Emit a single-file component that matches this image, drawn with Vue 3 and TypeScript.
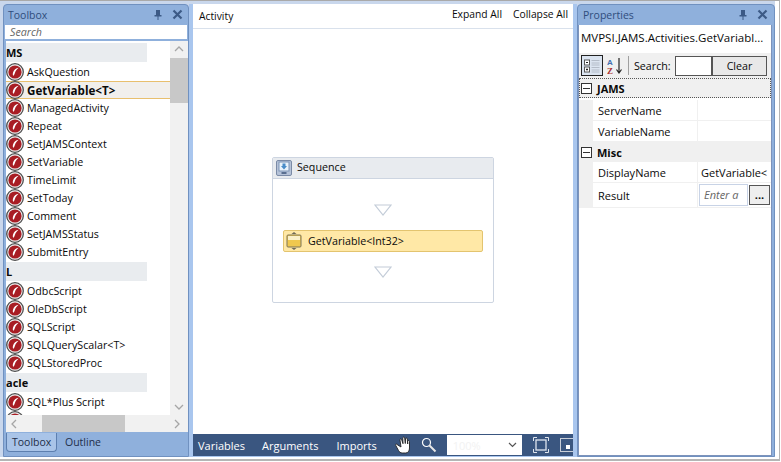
<script setup lang="ts">
interface Item { label?: string; header?: string; selected?: boolean }
const items: Item[] = [
  { header: 'MS' },
  { label: 'AskQuestion' }, { label: 'GetVariable<T>', selected: true }, { label: 'ManagedActivity' },
  { label: 'Repeat' }, { label: 'SetJAMSContext' }, { label: 'SetVariable' }, { label: 'TimeLimit' },
  { label: 'SetToday' }, { label: 'Comment' }, { label: 'SetJAMSStatus' }, { label: 'SubmitEntry' },
  { header: 'L' },
  { label: 'OdbcScript' }, { label: 'OleDbScript' }, { label: 'SQLScript' }, { label: 'SQLQueryScalar<T>' }, { label: 'SQLStoredProc' },
  { header: 'acle' },
  { label: 'SQL*Plus Script' }, { label: '' },
]
</script>

<template>
  <div class="outer">
    <div class="app">
      <section class="panel toolbox">
        <header class="head"><span>Toolbox</span><span class="head-icons">
          <svg width="10" height="12" viewBox="0 0 10 12"><path d="M3 1h4v5h1.500v1.500H5.500V11h-1V7.500H1.500V6H3z" fill="#3c5a86"/></svg>
          <svg width="11" height="11" viewBox="0 0 11 11"><path d="M1.500 1.500l8 8M9.500 1.500l-8 8" stroke="#3c5a86" stroke-width="2.200"/></svg>
        </span></header>
        <div class="search">Search</div>
        <div class="tool-body">
          <div class="tool-main">
            <div class="tool-list">
              <template v-for="(it, i) in items" :key="i">
                <div v-if="it.header" class="group" :class="{ first: i === 0 }"><b>{{ it.header }}</b></div>
                <div v-else class="tool" :class="{ sel: it.selected }">
                  <svg class="ball" width="18" height="18" viewBox="0 0 18 18">
                    <circle cx="9" cy="9" r="8.300" fill="#ececec" stroke="#4d4d4d" stroke-width="1.300"/>
                    <circle cx="9" cy="9" r="6.600" fill="#a81d24"/>
                    <path d="M12.600 4.800C10 5.200 7.700 7 7 9.800c-.4 1.500-.2 2.500.4 2.900.8-.5 1.100-1.500 1.500-2.700.6-1.900 1.800-3.600 3.700-5.200z" fill="#fff"/>
                  </svg>
                  <span>{{ it.label }}</span>
                </div>
              </template>
            </div>
            <div class="vscroll">
              <svg width="10" height="6" viewBox="0 0 10 6"><path d="M1 5l4-4 4 4" fill="none" stroke="#a6a6a6" stroke-width="1.300"/></svg>
              <div class="vthumb"></div>
              <div class="spacer"></div>
              <svg width="10" height="6" viewBox="0 0 10 6"><path d="M1 1l4 4 4-4" fill="none" stroke="#a6a6a6" stroke-width="1.300"/></svg>
            </div>
          </div>
          <div class="hscroll">
            <svg width="6" height="10" viewBox="0 0 6 10"><path d="M5 1L1 5l4 4" fill="none" stroke="#a6a6a6" stroke-width="1.300"/></svg>
            <div class="hthumb"></div>
            <svg width="6" height="10" viewBox="0 0 6 10"><path d="M1 1l4 4-4 4" fill="none" stroke="#a6a6a6" stroke-width="1.300"/></svg>
          </div>
        </div>
        <div class="tabs"><span class="tab on">Toolbox</span><span class="tab">Outline</span></div>
      </section>

      <section class="center">
        <div class="topbar"><span class="activity">Activity</span><span class="links"><span>Expand All</span><span>Collapse All</span></span></div>
        <div class="canvas">
          <div class="seq">
            <div class="seq-head">
              <svg width="16" height="16" viewBox="0 0 16 16">
                <rect x=".5" y=".5" width="15" height="15" rx="1.500" fill="#b5c2d8" stroke="#7a8aa6"/>
                <rect x="3" y="2" width="10" height="9" fill="#eaf3fb" stroke="#7d93b5"/>
                <path d="M6.500 3.500h3v2.500h1.500L8 9.500 5 6h1.500z" fill="#4a8cc8"/>
                <rect x="5.500" y="12" width="5" height="2" fill="#5a6f90"/>
              </svg>
              <span>Sequence</span>
            </div>
            <div class="seq-body">
              <svg class="tri" width="18" height="12" viewBox="0 0 18 12"><path d="M1 1h16L9 11z" fill="#fff" stroke="#c3ccd8" stroke-width="1.200"/></svg>
              <div class="activity-box">
                <svg width="16" height="18" viewBox="0 0 16 18">
                  <path d="M8 0l2.500 2h-5zM8 18l-2.500-2h5z" fill="#6f6a58"/>
                  <rect x="1" y="3" width="14" height="12" rx="1" fill="#f0c84e" stroke="#7d7458"/>
                  <rect x="2" y="4" width="12" height="4" fill="#fbf0c8"/>
                </svg>
                <span>GetVariable&lt;Int32&gt;</span>
              </div>
              <svg class="tri" width="18" height="12" viewBox="0 0 18 12"><path d="M1 1h16L9 11z" fill="#fff" stroke="#c3ccd8" stroke-width="1.200"/></svg>
            </div>
          </div>
        </div>
        <div class="bottombar">
          <span>Variables</span><span>Arguments</span><span>Imports</span>
          <svg class="hand" width="18" height="18" viewBox="0 0 18 18"><path d="M3 8.500C2 7.500 1.200 8.200 1.800 9.500l2.700 5c.8 1.500 2 2.500 4 2.500h3c2.500 0 4-2 4-5V5.500c0-1.300-1.700-1.300-1.800 0V8l-.4-5c-.1-1.300-1.800-1.300-1.800 0l-.2 4.500-.6-5.500c-.2-1.300-1.900-1.200-1.900.1l.2 5.600-1.300-4c-.4-1.200-2-.8-1.700.5L7 11z" fill="#fff" stroke="#222" stroke-width=".9"/></svg>
          <svg class="lens" width="16" height="16" viewBox="0 0 16 16"><circle cx="5.500" cy="5.500" r="4" fill="none" stroke="#fff" stroke-width="1.200"/><path d="M8.500 8.500l6 6" stroke="#e8e8e8" stroke-width="2"/></svg>
          <div class="combo"><span>100%</span><svg width="9" height="6" viewBox="0 0 9 6"><path d="M1 1l3.500 3.500L8 1" fill="none" stroke="#555" stroke-width="1.200"/></svg></div>
          <svg class="fit" width="16" height="16" viewBox="0 0 16 16"><rect x="3" y="3" width="10" height="10" fill="#3a5680" stroke="#dfe5ee" stroke-width="1.300"/><path d="M.5 4V.5H4M12 .5h3.500V4M15.500 12v3.500H12M4 15.500H.5V12" fill="none" stroke="#dfe5ee"/></svg>
          <div class="overview"><i></i></div>
        </div>
      </section>

      <section class="panel props">
        <header class="head"><span>Properties</span><span class="head-icons">
          <svg width="10" height="12" viewBox="0 0 10 12"><path d="M3 1h4v5h1.500v1.500H5.500V11h-1V7.500H1.500V6H3z" fill="#3c5a86"/></svg>
          <svg width="11" height="11" viewBox="0 0 11 11"><path d="M1.500 1.500l8 8M9.500 1.500l-8 8" stroke="#3c5a86" stroke-width="2.200"/></svg>
        </span></header>
        <div class="prop-body">
          <div class="prop-title">MVPSI.JAMS.Activities.GetVariabl...</div>
          <div class="prop-tools">
            <span class="cat-btn">
              <svg width="18" height="18" viewBox="0 0 18 18">
                <rect x="1.500" y="3" width="5" height="5" fill="#fff" stroke="#555"/><rect x="1.500" y="10" width="5" height="5" fill="#fff" stroke="#555"/>
                <path d="M3 5.500h2M3 12.500h2M4 11.500v2" stroke="#222"/>
                <path d="M8.500 3.500h8M8.500 6h8M8.500 8h8M8.500 10.500h8M8.500 13h8M8.500 15h8" stroke="#b4bcc8"/>
              </svg>
            </span>
            <svg class="az" width="20" height="18" viewBox="0 0 20 18">
              <text x="0" y="8" class="az-a">A</text><text x="0" y="17" class="az-z">Z</text>
              <path d="M12 1v14M9.500 12.500L12 16l2.500-3.500" fill="none" stroke="#222" stroke-width="1.200"/>
            </svg>
            <i class="sep"></i>
            <span class="search-label">Search:</span>
            <span class="search-box"></span>
            <span class="clear">Clear</span>
          </div>
          <div class="grid">
            <div class="cat focus"><span class="pm"></span><b>JAMS</b></div>
            <div class="row"><span class="name">ServerName</span><span class="val"></span></div>
            <div class="row"><span class="name">VariableName</span><span class="val"></span></div>
            <div class="cat"><span class="pm"></span><b>Misc</b></div>
            <div class="row disp"><span class="name">DisplayName</span><span class="val text">GetVariable&lt;</span></div>
            <div class="row tall"><span class="name">Result</span><span class="val edit"><em>Enter a</em></span><span class="dots">...</span></div>
          </div>
        </div>
      </section>
    </div>
  </div>
</template>

<style scoped>
.outer { width: 780px; height: 461px; box-sizing: border-box; border-top: 1px solid #a9a9a9; border-right: 1px solid #b5b5b5; border-bottom: 2px solid #b5b5b5; background: #fff; font-family: "Open Sans", "Noto Sans", sans-serif; font-size: 10.7px; color: #0a0a0a; overflow: hidden; }
.app { width: 775px; height: 456px; box-sizing: border-box; display: flex; padding: 3px 0 0 3px; background: #c9d7ec; }
.panel { display: flex; flex-direction: column; background: #8fb0dc; border: 1px solid #7091c0; border-radius: 4px 4px 0 0; box-sizing: border-box; }
.toolbox { width: 186px; flex: none; }
.head { height: 19px; flex: none; display: flex; justify-content: space-between; align-items: center; padding: 0 5px 0 4px; color: #2f4d7c; font-size: 10.500px; font-weight: 500; }
.props .head { padding: 0 6px 0 5px; }
.head-icons { display: flex; gap: 9px; align-items: center; }
.search { height: 14px; margin: 1px 1px 0 1px; background: #fff; font-style: italic; color: #666; padding-left: 5px; line-height: 14px; }
.tool-body { flex: 1; min-height: 0; margin: 2px 0 0 2px; background: #fff; display: flex; flex-direction: column; }
.tool-main { flex: 1; min-height: 0; display: flex; }
.tool-list { flex: 1; overflow: hidden; min-width: 0; padding-top: 2px; }
.group { height: 19px; width: 141px; background: #e9ecef; line-height: 19px; font-size: 11px; margin: 1px 0; }
.group.first { margin-top: 0; }
.group b { font-weight: 700; }
.tool { height: 18px; display: flex; align-items: center; gap: 3px; box-sizing: border-box; }
.tool.sel { background: #f1efec; border-top: 1px solid #e8bf6d; border-bottom: 1px solid #e8bf6d; font-weight: 700; font-size: 11.600px; }
.ball { flex: none; }
.vscroll { width: 18px; flex: none; background: #f1f1f1; display: flex; flex-direction: column; align-items: center; padding-top: 5px; padding-bottom: 5px; box-sizing: border-box; }
.vthumb { width: 18px; height: 45px; background: #c8c8c8; margin-top: 6px; flex: none; }
.spacer { flex: 1; }
.hscroll { height: 17px; flex: none; background: #f1f1f1; display: flex; align-items: center; padding: 0 8px 0 5px; }
.hthumb { width: 83px; height: 17px; background: #c8c8c8; margin: 0 auto 0 25px; }
.tabs { height: 24px; flex: none; display: flex; padding: 1px 0 0 2px; box-sizing: border-box; align-items: flex-start; gap: 2px; color: #1f2f4a; font-size: 10.500px; }
.tab { height: 19px; line-height: 18px; padding: 0 6px; font-weight: 500; }
.tab.on { background: #a9c4e8; border: 1px solid #5d7faf; border-top: 0; border-radius: 0 0 4px 4px; padding: 0 5px; width: 51px; box-sizing: border-box; }
.center { width: 388px; flex: none; background: #a9c6ee; padding: 0 4px 1px; box-sizing: border-box; display: flex; flex-direction: column; }
.topbar { height: 24px; flex: none; background: #fff; border-bottom: 1px solid #d9e1ec; display: flex; justify-content: space-between; align-items: center; padding: 0 5px 0 6px; font-size: 10.300px; }
.links { display: flex; gap: 11px; margin-top: -4px; }
.activity { margin-top: -1px; }
.canvas { flex: 1; min-height: 0; background: #fff; padding-top: 128px; display: flex; justify-content: center; align-items: flex-start; }
.seq { width: 222px; height: 146px; box-sizing: border-box; border: 1px solid #cdd5e1; border-radius: 2px; display: flex; flex-direction: column; }
.seq-head { height: 20px; flex: none; background: #e8ebef; border-bottom: 1px solid #cdd5e1; display: flex; align-items: center; gap: 5px; padding-left: 3px; }
.seq-head span { margin-top: -2px; }
.seq-body { flex: 1; display: flex; flex-direction: column; align-items: center; padding-top: 25px; }
.activity-box { width: 200px; height: 22px; box-sizing: border-box; margin: 14px 0; background: #ffe8a6; border: 1px solid #e3c46f; border-radius: 2px; display: flex; align-items: center; gap: 6px; padding-left: 2px; }
.bottombar { height: 22px; flex: none; background: #3a5680; color: #fff; display: flex; align-items: center; padding-left: 5px; font-size: 11px; font-weight: 500; overflow: hidden; }
.bottombar > span:nth-child(2) { margin-left: 17px; }
.bottombar > span:nth-child(3) { margin-left: 18px; }
.hand { margin-left: 17px; flex: none; }
.lens { margin-left: 9px; flex: none; }
.combo { width: 75px; height: 20px; margin-left: 10px; flex: none; background: #fff; display: flex; align-items: center; justify-content: space-between; padding: 0 5px 0 6px; box-sizing: border-box; color: #f2f2f2; }
.fit { margin-left: 11px; flex: none; }
.overview { width: 14px; height: 14px; margin-left: 11px; flex: none; border: 1px solid #c8ced8; box-sizing: border-box; display: flex; align-items: center; justify-content: center; }
.overview i { width: 4px; height: 4px; background: #fff; margin: 3px 0 0 3px; }
.props { width: 198px; flex: none; }
.prop-body { flex: 1; min-height: 0; margin: 1px 2px 0 0; background: #fff; border: 1px solid #7d93bb; border-top: 0; display: flex; flex-direction: column; }
.prop-title { height: 28px; flex: none; line-height: 25px; padding-left: 2px; font-size: 11.500px; white-space: nowrap; overflow: hidden; }
.prop-tools { height: 25px; flex: none; background: #f0f0f0; display: flex; align-items: center; padding-left: 2px; }
.cat-btn { width: 22px; height: 21px; flex: none; border: 1px solid #222; background: #dbe4f0; display: flex; align-items: center; justify-content: center; box-sizing: border-box; }
.az { margin-left: 4px; flex: none; }
.az-a { font: 700 8px "Liberation Sans", sans-serif; fill: #3f6fb0; }
.az-z { font: 700 9px "Liberation Serif", serif; fill: #a33; }
.sep { width: 1px; height: 19px; background: #a0a0a0; margin-left: 1px; flex: none; }
.search-label { margin-left: 5px; width: 41px; flex: none; white-space: nowrap; }
.search-box { width: 37px; height: 20px; background: #fff; border: 1px solid #555; box-sizing: border-box; flex: none; }
.clear { width: 55px; height: 20px; box-sizing: border-box; flex: none; border: 1px solid #555; background: #e8e8e8; text-align: center; line-height: 18px; }
.grid { flex: 1; display: flex; flex-direction: column; font-size: 11px; }
.cat { height: 20px; flex: none; background: #f0f0f0; display: flex; align-items: center; box-sizing: border-box; gap: 5px; padding-left: 2px; font-size: 11px; }
.cat.focus { border: 1px dotted #555; padding-left: 1px; margin-bottom: 2px; }
.pm { width: 9px; height: 9px; border: 1px solid #333; flex: none; position: relative; background: #fff; }
.pm::after { content: ""; position: absolute; left: 1px; right: 1px; top: 4px; height: 1px; background: #333; }
.row { height: 21px; flex: none; display: flex; box-sizing: border-box; border-left: 14px solid #f0f0f0; border-bottom: 1px solid #f0f0f0; align-items: center; }
.row.tall { height: 25px; }
.name { width: 105px; height: 100%; flex: none; border-right: 1px solid #f0f0f0; padding-left: 5px; box-sizing: border-box; line-height: 21px; }
.disp .name { line-height: 22px; }
.tall .name { line-height: 25px; }
.val { flex: 1; min-width: 0; overflow: hidden; white-space: nowrap; }
.val.text { padding-left: 3px; }
.val.edit { flex: none; width: 49px; height: 22px; margin-left: 1px; box-sizing: border-box; border: 1px solid #c8d3e6; line-height: 20px; padding-left: 4px; color: #666; }
.val.edit em { font-style: italic; }
.dots { width: 21px; height: 20px; box-sizing: border-box; flex: none; margin-left: 1px; border: 1px solid #555; background: #eee; text-align: center; line-height: 18px; font-weight: 700; }
</style>

<style>
html, body { margin: 0; background: #fff; }
</style>
